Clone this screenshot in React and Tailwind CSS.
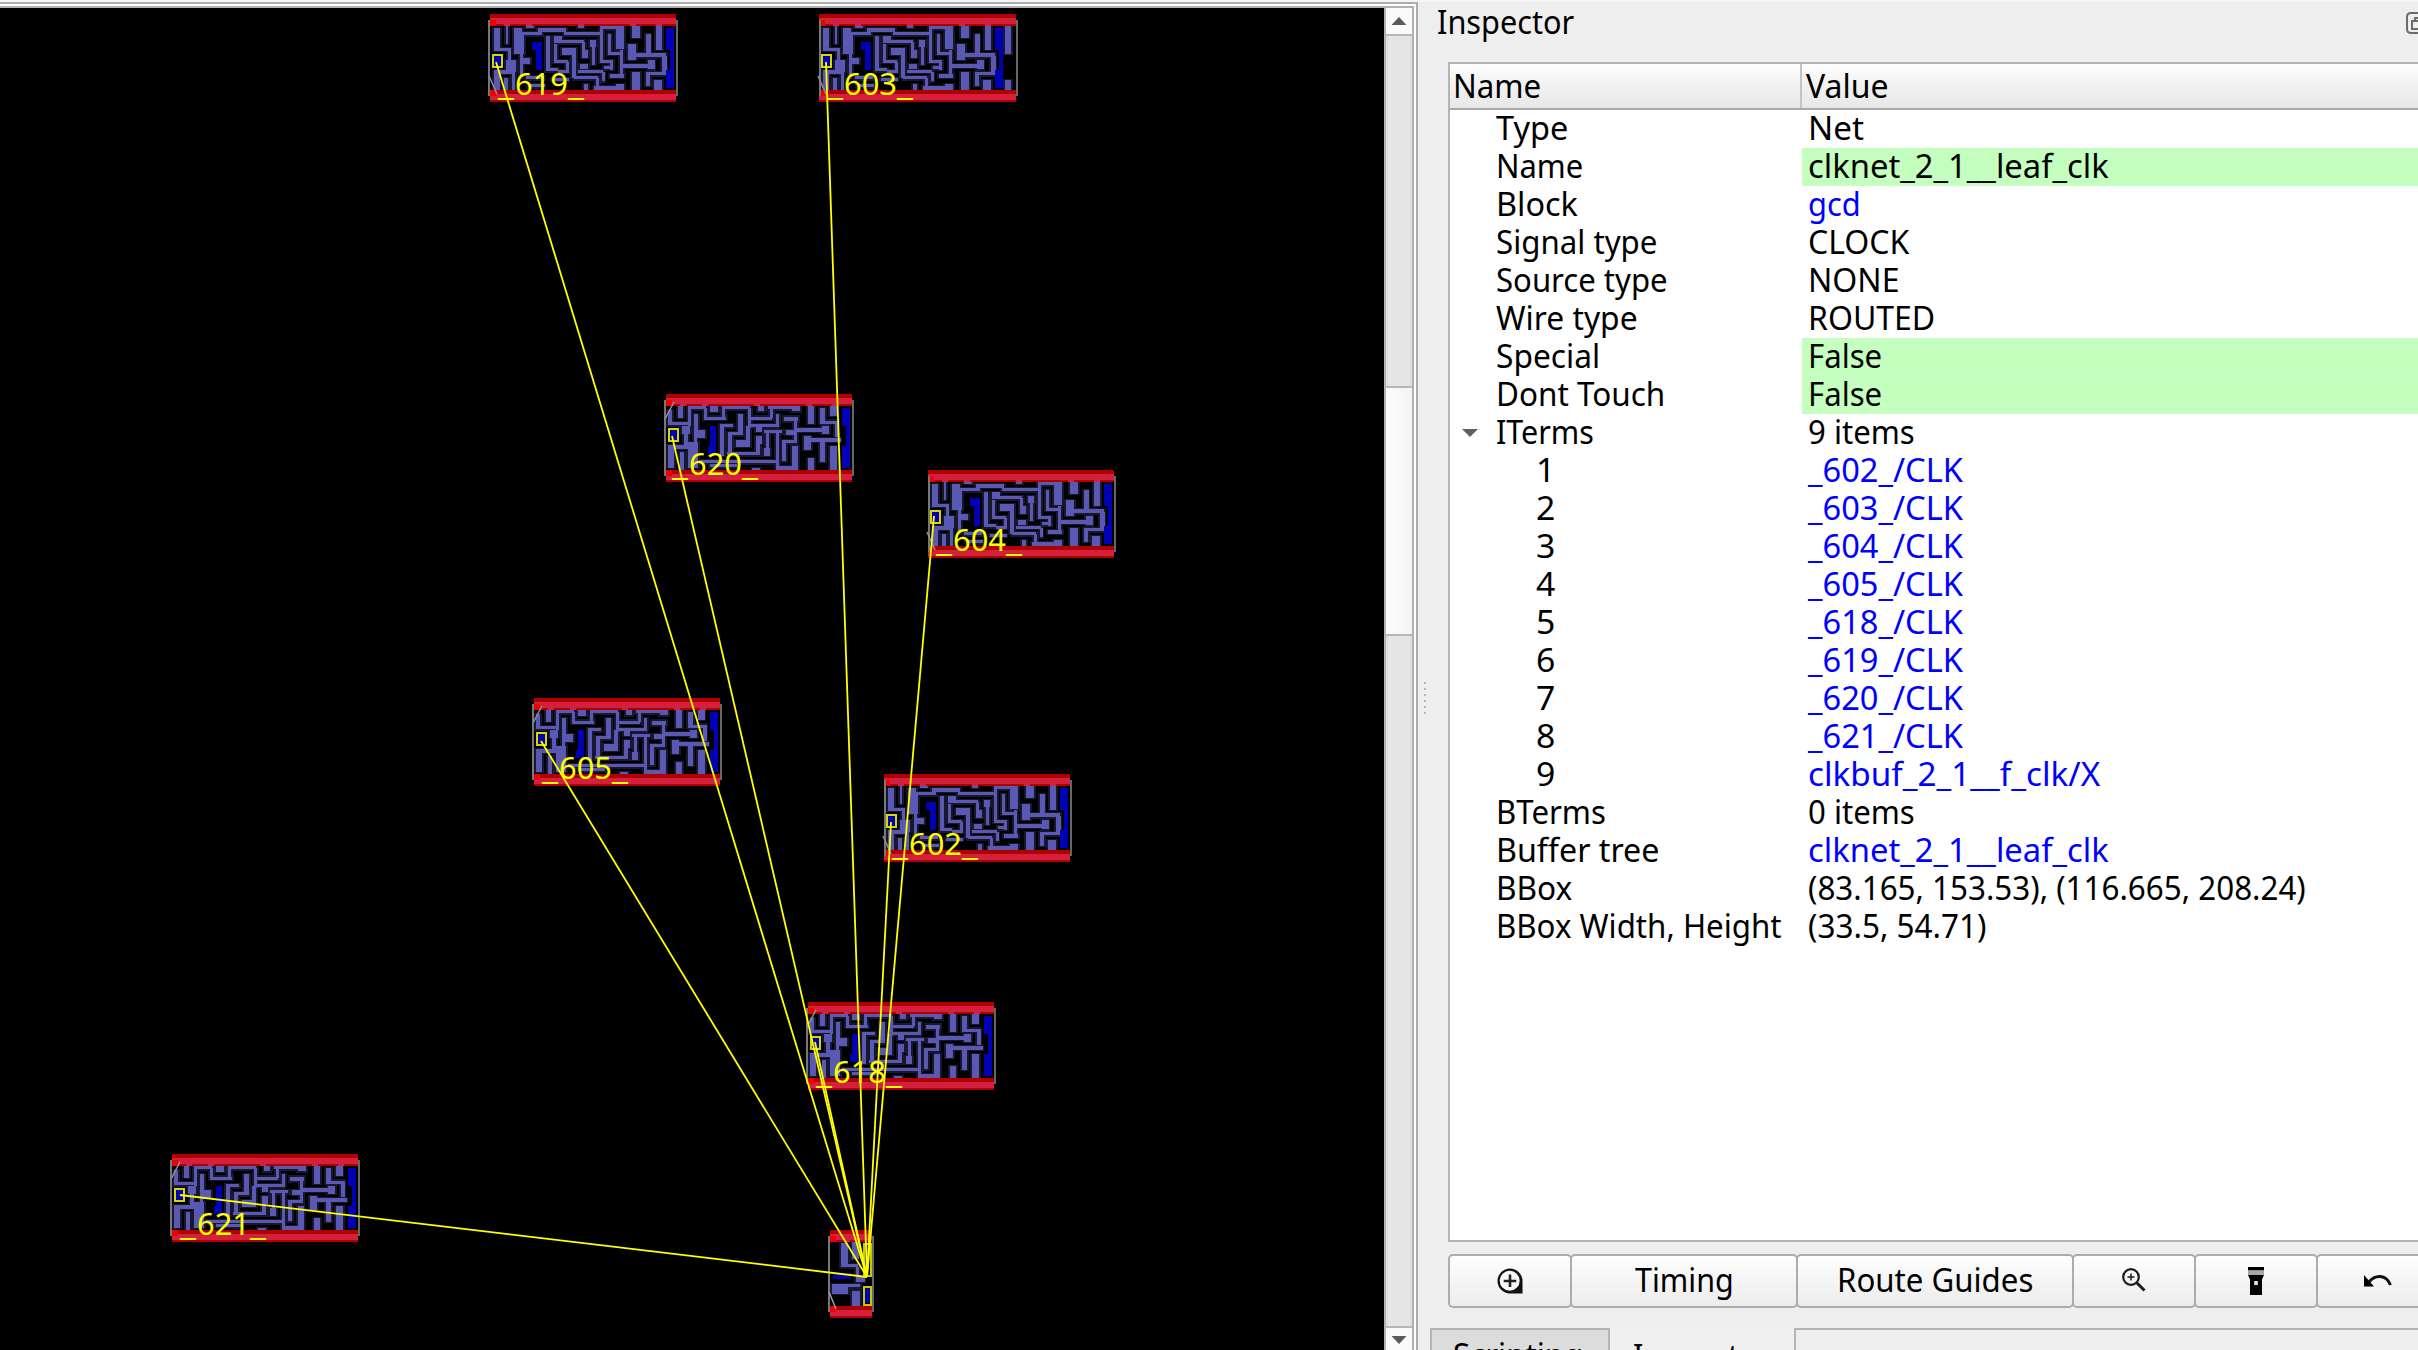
import React, { useLayoutEffect, useRef, useState } from "react";

/* Single-line label squeezed or stretched horizontally to a given width. */
function Fit({ w, children, className = "" }) {
  const ref = useRef(null);
  const [k, setK] = useState(1);
  useLayoutEffect(() => {
    setK(w / ref.current.offsetWidth);
  }, [w]);
  return (
    <span className="block shrink-0" style={{ width: w }}>
      <span
        ref={ref}
        className={"inline-block origin-left whitespace-pre " + className}
        style={{ transform: `scaleX(${k})` }}
      >
        {children}
      </span>
    </span>
  );
}

/* Metal shapes inside a flip-flop, in thirds of a pixel from the cell corner. */
const SHAPES_A = [
  [24,54,18,60],[60,36,6,66],[120,36,24,18],[276,36,18,18],[438,36,24,48],[510,36,18,84],
  [84,54,24,12],[84,66,30,66],[108,66,60,10],[156,54,84,12],[234,66,114,10],[342,48,72,10],
  [342,54,10,96],[390,48,24,70],[24,114,48,8],[66,114,8,36],[60,150,30,36],[24,180,60,12],
  [24,192,18,48],[54,204,12,36],[78,180,10,60],[102,132,10,12],[102,144,30,18],[102,162,10,40],
  [180,78,12,102],[180,174,36,10],[204,78,24,12],[204,90,90,10],[288,96,10,24],[288,120,18,24],
  [204,102,10,48],[204,150,42,8],[240,156,10,24],[216,180,34,8],[228,114,42,20],[258,120,12,84],
  [312,90,18,20],[318,108,10,56],[282,162,24,14],[276,180,76,8],[348,186,8,28],[264,198,72,10],
  [330,204,10,24],[324,228,90,12],[390,222,24,12],[366,72,10,56],[366,126,36,8],[402,120,10,80],
  [342,150,36,8],[372,150,10,30],[354,168,28,10],[372,192,42,12],[402,162,102,12],[486,150,20,28],
  [426,102,24,48],[426,130,114,12],[528,138,14,50],[492,186,50,10],[480,72,14,66],[438,186,24,54],
  [504,210,24,30],[480,186,12,42],[294,222,12,18],[120,198,54,10],[126,222,50,10],[198,204,50,8],
];
const BLUE_A = [[138,96,30,24],[150,120,18,60],[540,54,24,66],[552,120,12,60],[540,180,24,54]];

const SHAPES_B = [
  [24,60,12,36],[24,96,66,10],[54,42,16,42],[84,48,10,60],[84,48,54,10],[132,54,10,30],
  [132,80,66,10],[186,48,10,36],[186,48,84,10],[264,54,10,60],[264,80,72,10],[330,54,10,30],
  [324,48,96,10],[396,54,24,10],[150,36,24,30],[294,36,18,28],[66,108,24,24],[72,132,12,36],
  [24,166,60,10],[24,174,18,60],[60,186,12,54],[102,72,12,60],[102,120,34,24],[102,144,10,12],
  [84,156,30,78],[180,102,40,10],[180,102,12,96],[234,72,16,60],[204,126,44,10],[204,126,12,60],
  [228,150,42,20],[258,108,12,50],[264,102,92,10],[348,72,10,36],[288,108,18,18],[312,120,54,10],
  [288,138,18,24],[288,162,12,30],[200,186,100,10],[312,174,18,24],[318,126,10,50],[348,126,10,104],
  [120,210,230,10],[150,222,80,10],[348,228,66,12],[372,80,42,14],[402,90,10,60],[378,120,30,14],
  [366,150,46,10],[366,150,12,64],[396,168,18,66],[402,114,106,12],[486,108,22,24],[444,36,18,66],
  [480,54,16,48],[480,92,54,10],[524,92,12,50],[510,48,20,30],[432,138,22,42],[450,144,92,12],
  [480,156,16,60],[510,168,22,72],[444,204,18,36],[276,234,24,8],
];
const BLUE_B = [[150,108,18,60],[144,168,24,24],[546,54,24,54],[558,108,12,60],[546,168,24,66]];

const EXTRA_A = [[570,36,18,96],[570,210,18,36]];

/* Places where a vertical strap runs up into the rails. */
const TABS = [14, 36, 88, 140, 166];

const CELLS = [
  { id: "619", x: 490, y: 14, kind: "A" },
  { id: "603", x: 819, y: 14, kind: "A", wide: true, inset: true },
  { id: "620", x: 666, y: 394, kind: "B", label: 6 },
  { id: "604", x: 928, y: 470, kind: "A", inset: true },
  { id: "605", x: 534, y: 698, kind: "B" },
  { id: "602", x: 884, y: 774, kind: "A", inset: true },
  { id: "618", x: 808, y: 1002, kind: "B" },
  { id: "621", x: 172, y: 1154, kind: "B" },
];

const FLY = [
  [496, 62], [826, 62], [672, 436], [934, 516], [541, 741], [891, 822], [815, 1042], [180, 1195],
];

function Metal({ shapes, blue }) {
  return (
    <>
      {shapes.map(([x, y, w, h], i) => (
        <rect key={"h" + i} x={x - 5} y={y - 4} width={w + 10} height={h + 8} fill="#17172e" />
      ))}
      {shapes.map(([x, y, w, h], i) => (
        <rect key={"m" + i} x={x} y={y} width={w} height={h} fill="#5959b3" />
      ))}
      {blue.map(([x, y, w, h], i) => (
        <rect key={"b" + i} x={x} y={y} width={w} height={h} fill="#0000b4" />
      ))}
    </>
  );
}

function Rails({ w, h = 88, inset }) {
  return (
    <>
      {[0, h - 12].map((y) => (
        <g key={y}>
          <rect x="0" y={y} width={w} height="12" fill="#b20000" />
          <rect x="0" y={y + 4} width={w} height="6" fill="#d3203c" />
        </g>
      ))}
      {TABS.filter((t) => t < w - 8).map((t) => (
        <rect key={t} x={t} y="9" width="6" height="3" fill="#cc2244" />
      ))}
      <rect x="0" y="6" width="6" height="6" fill="#f00000" />
      <rect x="0" y={h - 12} width="6" height="6" fill="#f00000" />
      <rect x={inset ? 0 : -2} y="6" width="2" height={h - 12} fill="#777" />
      <rect x={w} y="6" width="2" height={h - 12} fill="#666" />
    </>
  );
}

function Cell({ x, y, kind, wide, inset }) {
  const w = wide ? 197 : 186;
  const a = kind === "A";
  const shapes = a ? (wide ? SHAPES_A.concat(EXTRA_A) : SHAPES_A) : SHAPES_B;
  const py = a ? 41 : 35;
  return (
    <g transform={`translate(${x} ${y})`} shapeRendering="crispEdges">
      <g transform={a ? "scale(0.33333) translate(-12 -12)" : "scale(0.33333) translate(-18 -12)"}>
        <Metal shapes={shapes} blue={a ? BLUE_A : BLUE_B} />
      </g>
      <Rails w={w} inset={inset} />
      <path
        d={a ? "M-1 62 L7 80" : "M-1 25 L8 8"}
        stroke="#9090a0"
        strokeWidth="1.5"
        fill="none"
        shapeRendering="auto"
      />
      <rect x="3" y={py} width="9" height="12" fill="#0000b4" stroke="#d8d800" strokeWidth="2" />
    </g>
  );
}

function Buffer() {
  return (
    <g transform="translate(830 1230)" shapeRendering="crispEdges">
      <g transform="scale(0.33333) translate(-150 -750)">
        <Metal
          shapes={[
            [182,790,22,66],[182,852,52,10],[228,862,10,40],[216,780,20,58],[156,912,84,10],
            [156,922,48,20],[216,932,24,50],[228,892,26,14],
          ]}
          blue={[[158,880,54,18],[252,795,16,60],[255,924,16,46]]}
        />
      </g>
      <Rails w={42} />
      <path d="M-1 62 L6 79" stroke="#a0a0a0" strokeWidth="1.5" shapeRendering="auto" />
      <rect x="34" y="14" width="7" height="32" fill="none" stroke="#c8c800" strokeWidth="2" />
      <rect x="34" y="57" width="7" height="18" fill="none" stroke="#c8c800" strokeWidth="2" />
    </g>
  );
}

function LayoutCanvas() {
  return (
    <svg
      className="block h-[1342px] w-[1384px] shrink-0 bg-black"
      viewBox="0 8 1384 1342"
      fontFamily="'Noto Sans', sans-serif"
    >
      {CELLS.map((c) => (
        <Cell key={c.id} {...c} />
      ))}
      <Buffer />
      {FLY.map(([x, y]) => (
        <line key={x} x1={x} y1={y} x2="867" y2="1277" stroke="#ffff00" strokeWidth="1.8" />
      ))}
      {CELLS.map((c) => {
        const x = c.x + (c.label || 8);
        return (
          <text key={c.id} y={c.y + 81} fontSize="31.5" fill="#ffff00">
            <tspan x={x} textLength="16" lengthAdjust="spacingAndGlyphs">_</tspan>
            <tspan x={x + 17} textLength="53" lengthAdjust="spacingAndGlyphs">{c.id}</tspan>
            <tspan x={x + 70} textLength="16" lengthAdjust="spacingAndGlyphs">_</tspan>
          </text>
        );
      })}
    </svg>
  );
}

function ScrollBar() {
  return (
    <div className="flex w-[28px] shrink-0 flex-col border-l-2 border-[#b4b4b4] bg-[#e5e5e5]">
      <div className="flex h-[28px] shrink-0 items-center justify-center border-b-2 border-[#b8b8b8] bg-[#fafafa]">
        <svg width="16" height="8" viewBox="0 0 16 8">
          <path d="M8 0 L15.5 8 H0.5 Z" fill="#5a5a5a" />
        </svg>
      </div>
      <div className="h-[350px] shrink-0 border-x-2 border-x-[#dedede]" />
      <div className="h-[250px] shrink-0 border-y-2 border-[#b8b8b8] bg-linear-to-r from-[#fdfdfd] to-[#f3f3f3]" />
      <div className="flex-1 border-x-2 border-x-[#dedede]" />
      <div className="flex h-[24px] shrink-0 justify-center border-t-2 border-[#b8b8b8] bg-[#fafafa] pt-[8px]">
        <svg width="16" height="8" viewBox="0 0 16 8">
          <path d="M0.5 0 H15.5 L8 8 Z" fill="#5a5a5a" />
        </svg>
      </div>
    </div>
  );
}

const ROWS = [
  ["Type", 72, "Net", 56],
  ["Name", 87, "clknet_2_1__leaf_clk", 301, "edit"],
  ["Block", 82, "gcd", 53, "link"],
  ["Signal type", 161, "CLOCK", 101],
  ["Source type", 172, "NONE", 91],
  ["Wire type", 142, "ROUTED", 127],
  ["Special", 104, "False", 74, "edit"],
  ["Dont Touch", 169, "False", 74, "edit"],
  ["ITerms", 98, "9 items", 107, "open"],
  ["1", 19, "_602_/CLK", 155, "link", true],
  ["2", 19, "_603_/CLK", 155, "link", true],
  ["3", 19, "_604_/CLK", 155, "link", true],
  ["4", 19, "_605_/CLK", 155, "link", true],
  ["5", 19, "_618_/CLK", 155, "link", true],
  ["6", 19, "_619_/CLK", 155, "link", true],
  ["7", 19, "_620_/CLK", 155, "link", true],
  ["8", 19, "_621_/CLK", 155, "link", true],
  ["9", 19, "clkbuf_2_1__f_clk/X", 292, "link", true],
  ["BTerms", 110, "0 items", 107],
  ["Buffer tree", 163, "clknet_2_1__leaf_clk", 301, "link"],
  ["BBox", 76, "(83.165, 153.53), (116.665, 208.24)", 498],
  ["BBox Width, Height", 286, "(33.5, 54.71)", 178],
];

function Row({ row }) {
  const [name, nw, value, vw, mode, child] = row;
  return (
    <div className="flex h-[38px] leading-[35px]">
      <div className={"flex w-[352px] shrink-0 " + (child ? "pl-[86px]" : mode === "open" ? "" : "pl-[46px]")}>
        {mode === "open" && (
          <span className="flex w-[46px] shrink-0 items-center pl-[12px]">
            <svg width="16" height="8" viewBox="0 0 16 8">
              <path d="M0 0 H16 L8 8 Z" fill="#606060" />
            </svg>
          </span>
        )}
        <Fit w={nw}>{name}</Fit>
      </div>
      <div
        className={
          "flex flex-1 pl-[6px] " +
          (mode === "edit" ? "bg-[#c4ffc0]" : mode === "link" ? "text-[#0000ff]" : "")
        }
      >
        <Fit w={vw}>{value}</Fit>
      </div>
    </div>
  );
}

function Button({ className, children }) {
  return (
    <div
      className={
        "flex h-[54px] shrink-0 items-center justify-center rounded-[5px] border-2 border-[#acacac] bg-linear-to-b from-[#fefefe] to-[#ececec] " +
        className
      }
    >
      {children}
    </div>
  );
}

function Inspector() {
  return (
    <div className="flex min-w-0 flex-1 flex-col">
      <div className="flex h-[58px] shrink-0 items-start justify-between pl-[19px] leading-[36px]">
        <Fit w={137}>Inspector</Fit>
        <svg className="mt-[8px] h-[22px] w-[12px] shrink-0" viewBox="0 0 12 22" fill="none">
          <path d="M12 1 H5 Q1 1 1 5 V17 Q1 21 5 21 H12" stroke="#6c6c66" strokeWidth="2" />
          <path d="M12 17 H6 V9 H12 M9 9 V6 H12" stroke="#6c6c66" strokeWidth="2" />
        </svg>
      </div>

      <div className="ml-[30px] flex h-[1180px] shrink-0 flex-col border-2 border-r-0 border-[#b4b4b4] bg-white">
        <div className="flex h-[46px] shrink-0 border-b-2 border-[#a8a8a8] bg-linear-to-b from-[#fdfdfd] from-0% via-[#f1f1f1] via-50% to-[#e8e8e8] to-100% leading-[43px]">
          <div className="flex w-[352px] shrink-0 border-r-2 border-[#c4c4c4] pl-[3px]">
            <Fit w={88}>Name</Fit>
          </div>
          <div className="flex pl-[4px]">
            <Fit w={83}>Value</Fit>
          </div>
        </div>
        {ROWS.map((r, i) => (
          <Row key={i} row={r} />
        ))}
      </div>

      <div className="mt-[12px] ml-[30px] flex shrink-0 overflow-hidden">
        <Button className="w-[124px]">
          <svg width="28" height="28" viewBox="0 0 28 28">
            <path d="M14 1.5 A12.5 12.5 0 1 0 14 26.5 H26.5 V14 A12.5 12.5 0 0 0 14 1.5 Z" fill="#111" />
            <circle cx="13.7" cy="13.7" r="10" fill="#f8f8f8" />
            <path d="M14 7.5 V20 M7.7 14 H20.3" stroke="#222" strokeWidth="2.6" />
          </svg>
        </Button>
        <Button className="-ml-[2px] w-[228px] pb-[3px]">
          <Fit w={99}>Timing</Fit>
        </Button>
        <Button className="-ml-[2px] w-[278px] pb-[3px]">
          <Fit w={196}>Route Guides</Fit>
        </Button>
        <Button className="-ml-[2px] w-[124px]">
          <svg className="-mt-[2px]" width="24" height="24" viewBox="0 0 24 24" fill="none" stroke="#1a1a1a">
            <circle cx="9" cy="9" r="7.8" strokeWidth="2.2" />
            <path d="M15 15 L22.5 22.5" strokeWidth="3" />
            <path d="M9 5.5 V12.5 M5.5 9 H12.5" strokeWidth="1.5" />
          </svg>
        </Button>
        <Button className="-ml-[2px] w-[124px]">
          <svg width="16" height="28" viewBox="0 0 16 28">
            <rect width="16" height="3.5" fill="#000" />
            <rect y="3.5" width="16" height="4.5" fill="#a6a6a6" />
            <path d="M0 8 H16 L14 12.5 V28 H2 V12.5 Z" fill="#000" />
            <rect x="6.2" y="14" width="3.6" height="4" fill="#e8e8e8" />
          </svg>
        </Button>
        <Button className="-ml-[2px] w-[124px]">
          <svg width="28" height="14" viewBox="0 0 28 14">
            <path d="M0 1 L10 12.5 H0 Z" fill="#000" />
            <path d="M5 8 C11 0.5 22 0 26.5 11" fill="none" stroke="#111" strokeWidth="3" />
          </svg>
        </Button>
      </div>

      <div className="mt-[20px] ml-[12px] flex h-[22px] shrink-0 overflow-hidden leading-[42px]">
        <div className="flex w-[180px] shrink-0 border-2 border-b-0 border-[#b4b4b4] bg-[#dcdcdc] pt-[4px] pl-[21px]">
          <Fit w={130}>Scripting</Fit>
        </div>
        <div className="flex w-[184px] shrink-0 bg-[#f0f0f0] pt-[7px] pl-[23px]">
          <Fit w={137}>Inspector</Fit>
        </div>
        <div className="flex-1 border-t-2 border-l-2 border-[#b4b4b4]" />
      </div>
    </div>
  );
}

export default function App() {
  return (
    <div className="flex h-[1350px] w-[2418px] overflow-hidden border-t-2 border-[#f6f6f6] bg-[#eeeeee] font-['Noto_Sans',sans-serif] text-[32px] text-black">
      <div className="flex w-[1418px] shrink-0 border-t-2 border-r-2 border-[#acacac] bg-white pt-[2px] pr-[2px]">
        <div className="flex h-[1344px] w-[1414px] shrink-0 border-t-2 border-r-2 border-[#b0b0b0]">
          <LayoutCanvas />
          <ScrollBar />
        </div>
      </div>
      <div className="flex w-0 shrink-0 flex-col justify-center">
        <div className="relative">
          <div className="absolute top-[6px] left-[6px] flex flex-col gap-[4px]">
            {[0, 1, 2, 3, 4, 5].map((i) => (
              <div key={i} className="size-[2px] bg-[#b8b8b8]" />
            ))}
          </div>
        </div>
      </div>
      <div className="flex min-w-0 flex-1 pt-[2px]">
        <Inspector />
      </div>
    </div>
  );
}
